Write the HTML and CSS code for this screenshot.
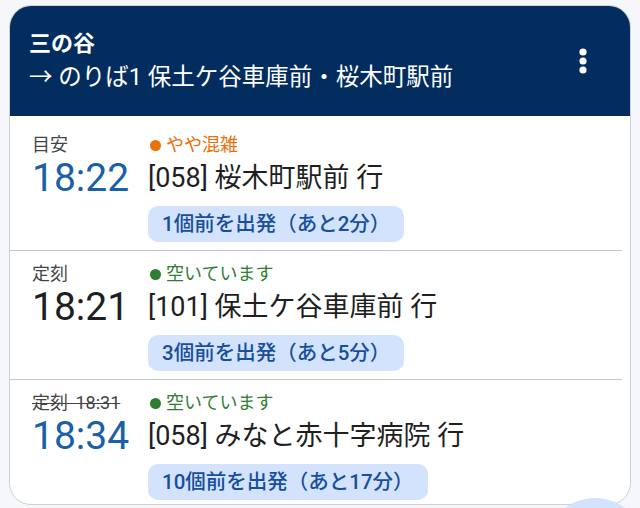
FILE: index.html
```html
<!DOCTYPE html>
<html lang="ja">
<head>
  <meta charset="utf-8">
  <title>三の谷 - 接近情報</title>
  <link rel="stylesheet" href="styles.css">
</head>
<body>
  <div class="stop-card">
    <div class="stop-header">
      <div class="stop-names">
        <div class="stop-title">三の谷</div>
        <div class="stop-route">→ のりば1 保土ケ谷車庫前・桜木町駅前</div>
      </div>
      <button class="menu-button" aria-label="メニュー">
        <svg width="10" height="28" viewBox="0 0 10 28">
          <circle cx="5" cy="5" r="3.6" fill="#fff"/>
          <circle cx="5" cy="14" r="3.6" fill="#fff"/>
          <circle cx="5" cy="23" r="3.6" fill="#fff"/>
        </svg>
      </button>
    </div>

    <!-- Upcoming departures -->
    <div class="bus-list">
      <div class="bus-row">
        <div class="time-label">目安</div>
        <div class="crowd crowd-busy"><span class="crowd-dot"></span>やや混雑</div>
        <div class="time estimated">18:22</div>
        <div class="destination">[058] 桜木町駅前 行</div>
        <div class="position-pill">1個前を出発（あと2分）</div>
      </div>
      <div class="bus-row">
        <div class="time-label">定刻</div>
        <div class="crowd crowd-free"><span class="crowd-dot"></span>空いています</div>
        <div class="time">18:21</div>
        <div class="destination">[101] 保土ケ谷車庫前 行</div>
        <div class="position-pill">3個前を出発（あと5分）</div>
      </div>
      <div class="bus-row">
        <div class="time-label"><s>定刻 18:31</s></div>
        <div class="crowd crowd-free"><span class="crowd-dot"></span>空いています</div>
        <div class="time estimated">18:34</div>
        <div class="destination">[058] みなと赤十字病院 行</div>
        <div class="position-pill">10個前を出発（あと17分）</div>
      </div>
    </div>
  </div>

  <button class="fab" aria-label="更新"></button>
</body>
</html>
```

FILE: styles.css
```css
body {
  margin: 0;
  padding: 5px 9px 0 9px;
  background-color: #f5f7fa;
  font-family: Roboto, "Noto Sans CJK JP", sans-serif;
  overflow: hidden;
}

.stop-card {
  background-color: #fff;
  border-radius: 22px;
  border: 1px solid #cdd0d5;
  overflow: hidden;
  height: 500px;
  box-sizing: border-box;
}

.stop-header {
  background-color: #022d5e;
  color: #fff;
  height: 110px;
  display: flex;
  justify-content: space-between;
  align-items: center;
  padding: 0 42px 0 19px;
}

.stop-title {
  font-size: 22px;
  font-weight: bold;
  line-height: 30px;
}

.stop-route {
  font-size: 23.5px;
  line-height: 32px;
  margin-top: 2px;
}

.menu-button {
  background: none;
  border: none;
  padding: 0;
  display: flex;
}

.bus-list {
  padding-top: 6px;
}

.bus-row {
  display: grid;
  grid-template-columns: 116px 1fr;
  padding: 12px 0 8px 22px;
  border-bottom: 1px solid #c8c8c8;
  margin-right: 8px;
}

.bus-row:last-child {
  border-bottom: none;
}

.time-label {
  font-size: 18px;
  line-height: 22px;
  color: #444;
  word-spacing: 3px;
}

.time-label s {
  text-decoration-thickness: 1px;
}

.crowd {
  font-size: 18px;
  line-height: 22px;
  display: flex;
  align-items: center;
}

.crowd-dot {
  width: 11px;
  height: 11px;
  border-radius: 50%;
  background-color: currentColor;
  margin: 0 5px 0 2px;
}

.crowd-busy {
  color: #e8710a;
}

.crowd-free {
  color: #2e7d32;
}

.time {
  font-size: 39px;
  line-height: 44px;
  color: #1f1f1f;
}

.time.estimated {
  color: #1a5fa8;
}

.destination {
  font-size: 27px;
  line-height: 44px;
  color: #1f1f1f;
}

.position-pill {
  grid-column: 2;
  justify-self: start;
  margin-top: 6px;
  background-color: #d3e3fd;
  color: #174f9b;
  font-size: 20.5px;
  font-weight: 500;
  line-height: 36px;
  padding: 0 14px;
  border-radius: 10px;
}

/* refresh button, mostly below the fold */
.fab {
  position: fixed;
  left: 545px;
  top: 498px;
  width: 100px;
  height: 100px;
  border-radius: 50%;
  border: none;
  background-color: #d3e3fd;
}
```
